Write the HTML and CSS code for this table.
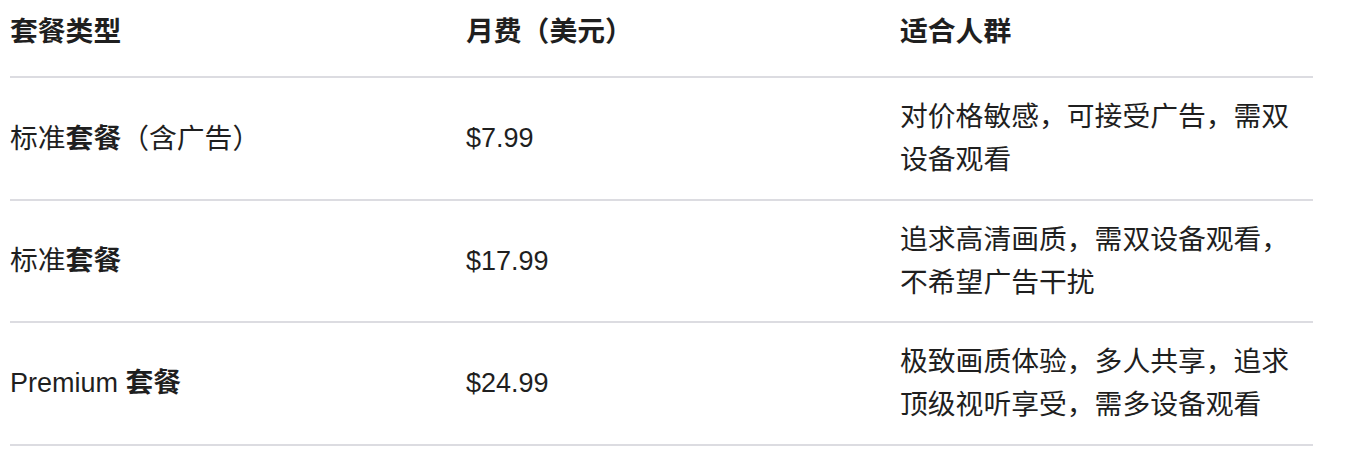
FILE: index.html
```html
<!DOCTYPE html>
<html lang="zh-CN">
<head>
<meta charset="utf-8">
<title>套餐对比</title>
<link rel="stylesheet" href="styles.css">
</head>
<body>
<table class="plans">
  <colgroup>
    <col class="c1">
    <col class="c2">
    <col class="c3">
  </colgroup>
  <thead>
    <tr><th>套餐类型</th><th>月费（美元）</th><th>适合人群</th></tr>
  </thead>
  <tbody>
    <tr><td>标准<span class="fb">套餐</span>（含广告）</td><td><span class="lat">$7.99</span></td><td>对价格敏感，可接受广告，需双设备观看</td></tr>
    <tr><td>标准<span class="fb">套餐</span></td><td><span class="lat">$17.99</span></td><td>追求高清画质，需双设备观看，不希望广告干扰</td></tr>
    <tr><td><span class="lat">Premium </span><span class="fb">套餐</span></td><td><span class="lat">$24.99</span></td><td>极致画质体验，多人共享，追求顶级视听享受，需多设备观看</td></tr>
  </tbody>
</table>
</body>
</html>
```

FILE: styles.css
```css
html, body {
  margin: 0;
  padding: 0;
  background: #ffffff;
}
body {
  font-family: "Liberation Sans", "Noto Sans CJK SC", sans-serif;
  color: #1f1f1f;
  font-size: 27.8px;
  line-height: 43px;
}
.plans {
  margin-left: 10px;
  width: 1303px;
  border-collapse: collapse;
  table-layout: fixed;
}
.c1 { width: 456px; }
.c2 { width: 434px; }
.c3 { width: 413px; }
.plans th {
  text-align: left;
  font-weight: 700;
  padding: 10px 16px 23px 0;
  border-bottom: 2px solid #dcdce1;
  vertical-align: middle;
}
.plans td {
  text-align: left;
  padding: 17.25px 16px 17.25px 0;
  border-bottom: 2px solid #dcdce1;
  vertical-align: middle;
}
.lat {
  font-size: 27px;
}
.fb {
  font-weight: 700;
}
```
